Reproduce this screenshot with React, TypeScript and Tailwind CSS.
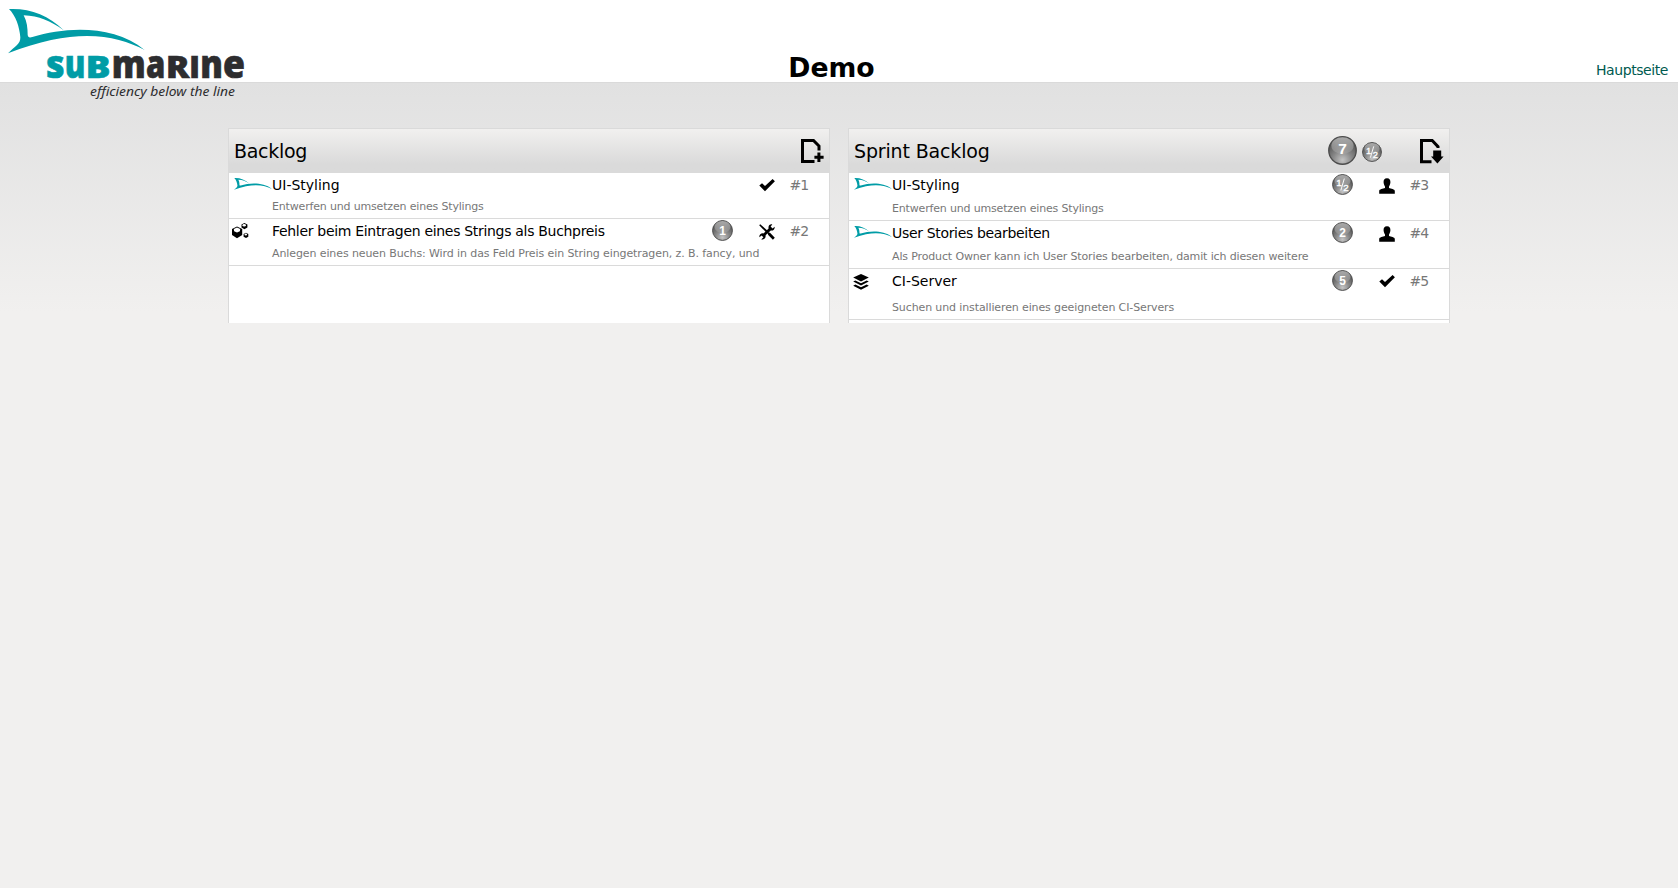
import type { ReactNode } from "react";

const FIN =
  "M27 27 C88 24 145 44 191 91 C150 62 118 48 71 46 C81 65 83 84 83 104 C84 112 88 114 97 111 C200 80 340 74 434 150 C345 102 220 82 24 160 C44 140 62 132 61 112 C58 80 48 48 27 27 Z";

const LETTERS = [
  { c: "s", x: 138, w: 56, size: 115, teal: true },
  { c: "u", x: 194, w: 62, size: 115, teal: true },
  { c: "B", x: 257, w: 74, size: 89, teal: true },
  { c: "m", x: 335, w: 102, size: 115, teal: false },
  { c: "a", x: 438, w: 58, size: 115, teal: false },
  { c: "R", x: 498, w: 70, size: 89, teal: false },
  { c: "I", x: 568, w: 32, size: 89, teal: false },
  { c: "n", x: 601, w: 68, size: 115, teal: false },
  { c: "e", x: 669, w: 66, size: 115, teal: false },
];

function Logo() {
  return (
    <svg viewBox="0 0 780 330" className="h-[110px] w-[260px]">
      <path d={FIN} fill="#009ca6" />
      <g fontFamily="'Open Sans', 'Noto Sans', sans-serif" fontWeight="800">
        {LETTERS.map((l) => (
          <text
            key={l.x}
            x={l.x}
            y="233"
            fontSize={l.size}
            textLength={l.w}
            lengthAdjust="spacingAndGlyphs"
            fill={l.teal ? "#009ca6" : "#2d2d2f"}
            stroke={l.teal ? "#009ca6" : "#2d2d2f"}
            strokeWidth="2"
          >
            {l.c}
          </text>
        ))}
      </g>
      <text
        x="270"
        y="287"
        fontSize="40"
        fontStyle="italic"
        fontFamily="'Noto Sans', sans-serif"
        textLength="435"
        lengthAdjust="spacingAndGlyphs"
        fill="#2d2d2f"
      >
        efficiency below the line
      </text>
    </svg>
  );
}

const FinIcon = () => (
  <svg viewBox="24 26 411 136" preserveAspectRatio="none" className="ml-[5px] mt-[5px] h-[12px] w-[38px]">
    <path d={FIN} fill="#009ca6" />
  </svg>
);

const BubblesIcon = () => (
  <svg viewBox="0 0 17 16" className="ml-[3px] mt-[4px] h-[16px] w-[17px]">
    <path d="M5 3.4 L10.2 6 V12 L5 15.2 L0 12 V6 Z" />
    <path d="M5 4.4 L8.2 6 L7.9 8.2 L5 9.6 L2.1 8.2 L1.8 6 Z" fill="#fff" />
    <path d="M12.4 0 L15.4 1.5 V4.5 L12.4 6.2 L9.5 4.5 V1.5 Z" />
    <ellipse cx="12.2" cy="2.3" rx="1.7" ry="1.3" fill="#fff" />
    <path d="M14 9.8 L16.3 11 V13.7 L14 15 L11.6 13.7 V11 Z" />
    <ellipse cx="13.8" cy="11.6" rx="1.3" ry="1" fill="#fff" />
  </svg>
);

const LayersIcon = () => (
  <svg viewBox="0 0 16 16" className="ml-[4px] mt-[5px] h-[16px] w-[16px]">
    <path d="M8 0 L15.8 3.6 L8 7.4 L0.2 3.6 Z" />
    <path d="M2.3 6.5 L8 9.2 L13.7 6.5 L15.8 7.6 L8 11.5 L0.2 7.6 Z" />
    <path d="M2.3 10.6 L8 13.3 L13.7 10.6 L15.8 11.7 L8 15.8 L0.2 11.7 Z" />
  </svg>
);

const CheckIcon = () => (
  <svg viewBox="0 0 16 16" className="mt-[5px] h-[16px] w-[16px]">
    <path d="M0.3 7.6 L3 5.2 L6 8 L13.6 1 L15.9 3.2 L6 13.3 Z" />
  </svg>
);

const ToolsIcon = () => (
  <svg viewBox="0 0 16 16" className="mt-[5px] h-[16px] w-[16px]">
    <path d="M0.2 1.2 L1.2 0.2 L8 6.3 L9.2 8.2 L11 8.8 L15.8 13.8 L13.9 15.8 L9.2 11 L8.6 9.2 L6.8 8 Z" />
    <path d="M13.3 0.4 L11.6 2.5 L13.6 4.6 L15.6 2.8 C16 5.6 14 7 11.8 6.5 L6.6 11.3 C7 14 5 16 2.2 15.5 L4.4 13.2 L2.6 11.4 L0.4 13.3 C0 10.6 2 9 4.5 9.4 L9.6 4.4 C9 1.8 10.8 0 13.3 0.4 Z" />
  </svg>
);

const PersonIcon = () => (
  <svg viewBox="0 0 16 16" className="mt-[5px] h-[16px] w-[16px]">
    <path d="M8 0.2 C10.6 0.2 11.6 2 11.4 4.5 C11.2 6.4 10.6 7.6 10 8.4 V10 C12 10.8 15.8 11 15.8 13 V15.8 H0.2 V13 C0.2 11 4 10.8 6 10 V8.4 C5.4 7.6 4.8 6.4 4.6 4.5 C4.4 2 5.4 0.2 8 0.2 Z" />
  </svg>
);

const AddPageIcon = () => (
  <svg viewBox="0 0 24 25" className="h-[25px] w-[24px]">
    <path d="M13.5 22.5 H1.5 V1.5 H12.5 L18 7 V11.5" fill="none" stroke="#000" strokeWidth="3" />
    <path d="M17.9 13.5 V23 M13.4 18.2 H22.6" fill="none" stroke="#000" strokeWidth="3" />
  </svg>
);

const DownPageIcon = () => (
  <svg viewBox="0 0 24 25" className="h-[25px] w-[24px]">
    <path d="M11.5 22.8 H1.5 V1.5 H12.2 L18 7.6 V9" fill="none" stroke="#000" strokeWidth="3" />
    <path d="M13.2 11.4 H21.2 V17.5 H23.6 L17.4 24.6 L11 17.5 H13.2 Z" />
  </svg>
);

function Badge({ value, size }: { value: string; size: number }) {
  return (
    <svg viewBox="0 0 30 30" width={size} height={size} className="shrink-0">
      <defs>
        <radialGradient id="ball" cx="50%" cy="85%" r="80%">
          <stop offset="0" stopColor="#c4c4c4" />
          <stop offset="0.45" stopColor="#868686" />
          <stop offset="1" stopColor="#484848" />
        </radialGradient>
        <linearGradient id="gloss" x1="0" y1="0" x2="0" y2="1">
          <stop offset="0" stopColor="#fff" stopOpacity="0.55" />
          <stop offset="1" stopColor="#fff" stopOpacity="0.08" />
        </linearGradient>
      </defs>
      <circle cx="15" cy="15" r="14.2" fill="url(#ball)" stroke="#4c4c4c" strokeWidth="1.4" />
      <ellipse cx="15" cy="10" rx="11.5" ry="8.6" fill="url(#gloss)" />
      {value === "½" ? (
        <g fill="#fff" stroke="#fff" fontFamily="'Liberation Sans', sans-serif" fontSize="14">
          <text x="6" y="17.5" strokeWidth="0.5">1</text>
          <text x="16" y="24" strokeWidth="0.5">2</text>
          <path d="M17.6 6.5 L12.6 23.5" strokeWidth="1.4" />
        </g>
      ) : (
        <text
          x="15"
          y={size > 25 ? 18.2 : 20.8}
          textAnchor="middle"
          fontSize={size > 25 ? 16 : 17}
          fontWeight="700"
          fill="#fff"
          fontFamily="'Liberation Sans', sans-serif"
        >
          {value}
        </text>
      )}
    </svg>
  );
}

type Story = {
  id: string;
  icon: ReactNode;
  title: string;
  titleClass: string;
  text: string;
  textClass: string;
  points?: string;
  status: ReactNode;
};

const backlog: Story[] = [
  {
    id: "#1",
    icon: <FinIcon />,
    title: "UI-Styling",
    titleClass: "tracking-[0px]",
    text: "Entwerfen und umsetzen eines Stylings",
    textClass: "pt-[4px] pb-[3px] tracking-[-0.17px]",
    status: <CheckIcon />,
  },
  {
    id: "#2",
    icon: <BubblesIcon />,
    title: "Fehler beim Eintragen eines Strings als Buchpreis",
    titleClass: "tracking-[-0.31px]",
    text: "Anlegen eines neuen Buchs: Wird in das Feld Preis ein String eingetragen, z. B. fancy, und",
    textClass: "pt-[5px] pb-[3px] tracking-[-0.1px]",
    points: "1",
    status: <ToolsIcon />,
  },
];

const sprint: Story[] = [
  {
    id: "#3",
    icon: <FinIcon />,
    title: "UI-Styling",
    titleClass: "tracking-[0px]",
    text: "Entwerfen und umsetzen eines Stylings",
    textClass: "pt-[6px] pb-[3px] tracking-[-0.17px]",
    points: "½",
    status: <PersonIcon />,
  },
  {
    id: "#4",
    icon: <FinIcon />,
    title: "User Stories bearbeiten",
    titleClass: "tracking-[-0.33px]",
    text: "Als Product Owner kann ich User Stories bearbeiten, damit ich diesen weitere",
    textClass: "pt-[6px] pb-[3px] tracking-[-0.14px]",
    points: "2",
    status: <PersonIcon />,
  },
  {
    id: "#5",
    icon: <LayersIcon />,
    title: "CI-Server",
    titleClass: "tracking-[0px]",
    text: "Suchen und installieren eines geeigneten CI-Servers",
    textClass: "pt-[9px] pb-[3px] tracking-[-0.12px]",
    points: "5",
    status: <CheckIcon />,
  },
];

function Row({ story }: { story: Story }) {
  return (
    <li className="grid grid-cols-[43px_440px_47px_30.5px_1fr] border-b border-[#dadada]">
      <div>{story.icon}</div>
      <div className="whitespace-nowrap pt-[2px]">
        <h3 className={`text-[14px] leading-[20px] text-black ${story.titleClass}`}>{story.title}</h3>
        <p className={`text-[11px] leading-[16px] text-[#777] ${story.textClass}`}>{story.text}</p>
      </div>
      <div className="pt-[1px]">{story.points && <Badge value={story.points} size={21} />}</div>
      <div>{story.status}</div>
      <div className="pt-[2px] text-[14px] leading-[20px] tracking-[-1px] text-[#777]">{story.id}</div>
    </li>
  );
}

type PanelProps = { title: string; titleClass: string; stories: Story[]; children: ReactNode };

function Panel({ title, titleClass, stories, children }: PanelProps) {
  return (
    <section className="h-[195px] w-[602px] border-x border-t border-[#dadada] bg-white">
      <header className="flex h-[44px] items-start bg-linear-to-b from-[#f1f0ef] to-[#dadada] to-80% pl-[5px]">
        <h2 className={`flex-1 pt-[9px] text-[19px] leading-[26px] text-black ${titleClass}`}>{title}</h2>
        {children}
      </header>
      <ul>
        {stories.map((s) => (
          <Row key={s.id} story={s} />
        ))}
      </ul>
    </section>
  );
}

export default function App() {
  return (
    <div className="relative flex min-h-[888px] flex-col bg-[#f1f0ef] font-['DejaVu_Sans',sans-serif]">
      <div className="absolute left-0 top-0 z-10">
        <Logo />
      </div>
      <header className="grid h-[82px] grid-cols-3 items-end bg-white">
        <h1 className="col-start-2 pb-px pr-[15px] text-center text-[26.7px] font-bold leading-[26px] text-black">
          Demo
        </h1>
        <a className="pb-[3px] pr-[10px] text-right text-[14px] leading-[18px] tracking-[-0.43px] text-[#005a50]">
          Hauptseite
        </a>
      </header>
      <main className="flex flex-1 justify-center gap-[18px] border-t border-[#dadada] bg-linear-to-b from-[#e1e1e1] to-[#f1f0ef] to-[230px] pt-[45px]">
        <Panel title="Backlog" titleClass="tracking-[-0.3px]" stories={backlog}>
          <div className="pr-[4px] pt-[10px]">
            <AddPageIcon />
          </div>
        </Panel>
        <Panel title="Sprint Backlog" titleClass="tracking-[-0.15px]" stories={sprint}>
          <div className="flex pr-[38px] pt-[7px]">
            <Badge value="7" size={29} />
            <div className="pl-[5px] pt-[6px]">
              <Badge value="½" size={20} />
            </div>
          </div>
          <div className="pr-[5px] pt-[10px]">
            <DownPageIcon />
          </div>
        </Panel>
      </main>
    </div>
  );
}
